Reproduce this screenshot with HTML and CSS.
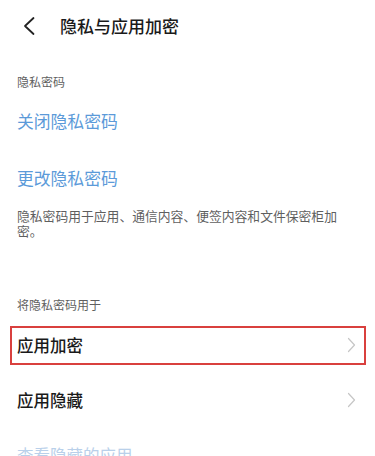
FILE: index.html
```
<!DOCTYPE html>
<html lang="zh-CN">
<head>
    <meta charset="UTF-8">
    <meta name="viewport" content="width=device-width, initial-scale=1.0">
    <title>隐私与应用加密</title>
    <link rel="stylesheet" href="styles.css">
</head>
<body>
    <div class="header">
        <svg class="back" width="14" height="20" viewBox="0 0 14 20">
            <path d="M11.5 2 L3 10 L11.5 18" fill="none" stroke="#222" stroke-width="1.8" stroke-linecap="round" stroke-linejoin="round"/>
        </svg>
        <h1>隐私与应用加密</h1>
    </div>

    <div class="caption first">隐私密码</div>
    <div class="link">关闭隐私密码</div>
    <div class="link">更改隐私密码</div>
    <p class="desc">隐私密码用于应用、通信内容、便签内容和文件保密柜加密。</p>

    <div class="caption second">将隐私密码用于</div>
    <div class="item highlight">
        <span>应用加密</span>
        <svg class="arrow" width="9" height="16" viewBox="0 0 9 16">
            <path d="M1.5 1.5 L7.5 8 L1.5 14.5" fill="none" stroke="#c6c6c6" stroke-width="1.2" stroke-linecap="round" stroke-linejoin="round"/>
        </svg>
    </div>
    <div class="item">
        <span>应用隐藏</span>
        <svg class="arrow" width="9" height="16" viewBox="0 0 9 16">
            <path d="M1.5 1.5 L7.5 8 L1.5 14.5" fill="none" stroke="#c6c6c6" stroke-width="1.2" stroke-linecap="round" stroke-linejoin="round"/>
        </svg>
    </div>
    <div class="item faded">查看隐藏的应用</div>
</body>
</html>
```

FILE: styles.css
```
:root {
    --text-color: #1a1a1a;
    --caption-color: #5f5f5f;
    --link-color: #5b9ad9;
    --faded-color: #b9d0ea;
    --mark-color: #d9403e;
}

body {
    margin: 0;
    background: #ffffff;
    color: var(--text-color);
    font-family: "Noto Sans CJK SC", "Noto Sans", sans-serif;
    overflow: hidden;
}

.header {
    display: flex;
    align-items: center;
    height: 50px;
    padding-left: 22px;
}

.back {
    display: block;
    margin-top: 1px;
}

.header h1 {
    margin: 0 0 0 24px;
    font-size: 17px;
    font-weight: 500;
    letter-spacing: 0;
}

.caption {
    height: 24px;
    line-height: 24px;
    padding-left: 17px;
    font-size: 12px;
    color: var(--caption-color);
}

.caption.first {
    margin-top: 20px;
}

.caption.second {
    margin-top: 55px;
}

.link {
    display: flex;
    align-items: center;
    height: 53px;
    padding: 0 0 4px 17px;
    font-size: 16.8px;
    color: var(--link-color);
}

.desc {
    margin: 0;
    max-width: 330px;
    padding-left: 17px;
    font-size: 12.8px;
    line-height: 15px;
    color: var(--caption-color);
}

.item {
    position: relative;
    display: flex;
    align-items: center;
    justify-content: space-between;
    height: 55px;
    padding: 0 19px 0 17px;
    font-size: 16.5px;
    font-weight: 500;
}

.item .arrow {
    display: block;
}

.item.highlight::after {
    content: "";
    position: absolute;
    top: 9px;
    bottom: 7px;
    left: 10px;
    right: 9px;
    border: 2.5px solid var(--mark-color);
}

.item.faded {
    font-weight: 400;
    color: var(--faded-color);
}
```
